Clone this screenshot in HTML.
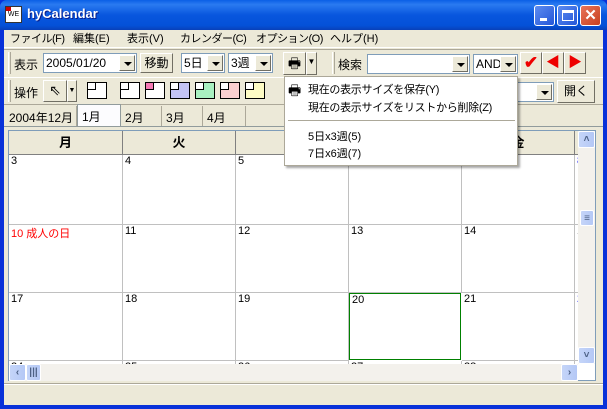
<!DOCTYPE html>
<html><head><meta charset="utf-8"><style>
*{margin:0;padding:0;box-sizing:border-box}
body{width:607px;height:409px;overflow:hidden;font:11px "Liberation Sans","Noto Sans CJK JP",sans-serif;background:#0831d9;position:relative}
.a{position:absolute;white-space:nowrap}
.win{left:4px;top:30px;width:599px;height:375px;background:#ece9d8}
.title{left:0;top:0;width:607px;height:30px;background:linear-gradient(#0a5fe6,#2a7af0 15%,#0856de 50%,#0451d8 85%,#0840b8);border-radius:7px 7px 0 0}
.tb{top:5px;width:21px;height:21px;border:1px solid #fff;border-radius:3px;background:linear-gradient(135deg,#5d8cf0,#2456d8)}
.combo{background:#fff;border:1px solid #7f9db9;height:20px;font-size:12px;padding:2px 2px;line-height:14px;overflow:hidden}
.dd{position:absolute;right:1px;top:1px;width:16px;height:16px;background:#ece9d8;border:1px solid;border-color:#fff #716f64 #716f64 #fff}
.dd:after{content:"";position:absolute;left:4px;top:6px;border:4px solid transparent;border-top:4px solid #000;border-bottom:0}
.btn{background:#ece9d8;border:1px solid;border-color:#fff #716f64 #716f64 #fff;text-align:center;line-height:18px}
.sq{width:20px;height:17px;border:1px solid #000;background:#fff}
.sq i{position:absolute;left:-1px;top:-1px;width:9px;height:8px;border:1px solid #000}
.tab{top:106px;height:20px;border-right:1px solid #aca899;padding:3px 4px 0;font-size:12px}
.cell{border-right:1px solid #c0c0c0;border-bottom:1px solid #c0c0c0;background:#fff;font-size:11px;padding:0 2px}
.hd{top:0;height:24px;background:#ece9d8;border-right:1px solid #808080;border-bottom:1px solid #808080;text-align:center;font-size:13px;line-height:24px;font-weight:bold}
.sb{background:linear-gradient(90deg,#c5d5f8,#b4c8f6);border:1px solid #fff;border-radius:2px;width:17px;height:17px;color:#4d6185;font-size:10px;text-align:center;line-height:15px;font-weight:bold}
</style></head><body>
<div class="a title"></div>
<div class="a" style="left:5px;top:6px;width:17px;height:17px;background:#fff;border:1px solid #333"><div style="height:4px;background:#c00;width:5px"></div><div style="font-size:7px;line-height:8px;text-align:center">WE</div></div>
<div class="a" style="left:27px;top:6px;color:#fff;font-weight:bold;font-size:13px;text-shadow:1px 1px #0a1e8c">hyCalendar</div>
<div class="a tb" style="left:534px"><div style="position:absolute;left:5px;top:12px;width:7px;height:3px;background:#fff"></div></div>
<div class="a tb" style="left:557px"><div style="position:absolute;left:4px;top:4px;width:12px;height:11px;border:1px solid #fff;border-top:3px solid #fff"></div></div>
<div class="a tb" style="left:580px;background:linear-gradient(135deg,#e8745a,#c8401e);color:#fff;font-weight:bold;font-size:15px;text-align:center;line-height:19px">✕</div>
<div class="a win"></div>
<!-- menu -->
<div class="a" style="left:4px;top:30px;width:599px;height:18px;font-size:11px;line-height:18px;border-bottom:1px solid #fff">
<span class="a" style="left:6px;letter-spacing:-0.5px">ファイル(F)</span><span class="a" style="left:69px">編集(E)</span><span class="a" style="left:123px">表示(V)</span><span class="a" style="left:176px;letter-spacing:-0.5px">カレンダー(C)</span><span class="a" style="left:252px;letter-spacing:-0.5px">オプション(O)</span><span class="a" style="left:326px">ヘルプ(H)</span></div>
<!-- toolbar1 -->
<div class="a" style="left:4px;top:49px;width:599px;height:1px;background:#aca899"></div>
<div class="a" style="left:8px;top:52px;width:3px;height:22px;border-left:1px solid #fff;border-right:1px solid #aca899"></div>
<div class="a" style="left:14px;top:56px;font-size:12px">表示</div>
<div class="a combo" style="left:43px;top:53px;width:94px">2005/01/20<div class="dd"></div></div>
<div class="a btn" style="left:140px;top:53px;width:33px;height:20px;font-size:12px">移動</div>
<div class="a combo" style="left:181px;top:53px;width:44px">5日<div class="dd"></div></div>
<div class="a combo" style="left:228px;top:53px;width:45px">3週<div class="dd"></div></div>
<div class="a btn" style="left:283px;top:52px;width:23px;height:23px;font-size:14px;line-height:20px">🖶</div>
<div class="a btn" style="left:306px;top:52px;width:11px;height:23px;font-size:8px">▼</div>
<div class="a" style="left:332px;top:52px;width:3px;height:22px;border-left:1px solid #fff;border-right:1px solid #aca899"></div>
<div class="a" style="left:338px;top:56px;font-size:12px">検索</div>
<div class="a combo" style="left:367px;top:54px;width:103px"><div class="dd"></div></div>
<div class="a combo" style="left:473px;top:54px;width:45px">AND<div class="dd"></div></div>
<div class="a btn" style="left:520px;top:52px;width:22px;height:22px;color:#e00;font-size:17px;line-height:20px;font-weight:bold">✔</div>
<div class="a btn" style="left:542px;top:52px;width:22px;height:22px;color:#e00;font-size:14px;line-height:19px">◀</div>
<div class="a btn" style="left:564px;top:52px;width:22px;height:22px;color:#e00;font-size:14px;line-height:19px">▶</div>
<!-- toolbar2 -->
<div class="a" style="left:4px;top:77px;width:599px;height:1px;background:#fff"></div>
<div class="a" style="left:8px;top:80px;width:3px;height:22px;border-left:1px solid #fff;border-right:1px solid #aca899"></div>
<div class="a" style="left:14px;top:84px;font-size:12px">操作</div>
<div class="a btn" style="left:43px;top:80px;width:24px;height:22px;font-size:14px">⇖</div>
<div class="a btn" style="left:67px;top:80px;width:10px;height:22px;font-size:7px;line-height:20px">▼</div>
<div class="a sq" style="left:87px;top:82px"><i style="background:#fff"></i></div>
<div class="a sq" style="left:120px;top:82px"><i style="background:#fff"></i></div>
<div class="a sq" style="left:145px;top:82px"><i style="background:#f57ab4"></i></div>
<div class="a sq" style="left:170px;top:82px;background:#c4c4f4"><i style="background:#fff"></i></div>
<div class="a sq" style="left:195px;top:82px;background:#a8f0c0"><i style="background:#fff"></i></div>
<div class="a sq" style="left:220px;top:82px;background:#fbd0d0"><i style="background:#fff"></i></div>
<div class="a sq" style="left:245px;top:82px;background:#fdfbc4"><i style="background:#fff"></i></div>
<div class="a combo" style="left:500px;top:82px;width:54px"><div class="dd"></div></div>
<div class="a btn" style="left:557px;top:80px;width:38px;height:23px;line-height:21px;font-size:12px">開く</div>
<div class="a" style="left:4px;top:104px;width:599px;height:1px;background:#aca899"></div>
<!-- tabs -->
<div class="a tab" style="left:5px;width:72px">2004年12月</div>
<div class="a tab" style="left:77px;top:104px;width:44px;height:23px;background:#fcfcfe;border:1px solid #919b9c;border-bottom:none;padding-top:3px">1月</div>
<div class="a tab" style="left:121px;width:41px">2月</div>
<div class="a tab" style="left:162px;width:41px">3月</div>
<div class="a tab" style="left:203px;width:43px">4月</div>
<div class="a" style="left:4px;top:126px;width:599px;height:1px;background:#919b9c"></div>
<!-- grid -->
<div class="a" style="left:8px;top:130px;width:588px;height:251px;background:#fff;border:1px solid #7f9db9;overflow:hidden">
<div class="a hd" style="left:0;width:114px">月</div>
<div class="a hd" style="left:114px;width:113px">火</div>
<div class="a hd" style="left:227px;width:113px">水</div>
<div class="a hd" style="left:340px;width:113px">木</div>
<div class="a hd" style="left:453px;width:113px">金</div>
<div class="a hd" style="left:566px;width:113px">土</div>
</div>
<div class="a" style="left:9px;top:155px;width:569px;height:209px;overflow:hidden">
<div class="a cell" style="left:0;top:0;width:114px;height:70px">3</div>
<div class="a cell" style="left:114px;top:0;width:113px;height:70px">4</div>
<div class="a cell" style="left:227px;top:0;width:113px;height:70px">5</div>
<div class="a cell" style="left:340px;top:0;width:113px;height:70px">6</div>
<div class="a cell" style="left:453px;top:0;width:113px;height:70px">7</div>
<div class="a cell" style="left:566px;top:0;width:113px;height:70px;color:#00f">8</div>
<div class="a cell" style="left:0;top:70px;width:114px;height:68px;color:#f00">10 成人の日</div>
<div class="a cell" style="left:114px;top:70px;width:113px;height:68px">11</div>
<div class="a cell" style="left:227px;top:70px;width:113px;height:68px">12</div>
<div class="a cell" style="left:340px;top:70px;width:113px;height:68px">13</div>
<div class="a cell" style="left:453px;top:70px;width:113px;height:68px">14</div>
<div class="a cell" style="left:566px;top:70px;width:113px;height:68px">15</div>
<div class="a cell" style="left:0;top:138px;width:114px;height:68px">17</div>
<div class="a cell" style="left:114px;top:138px;width:113px;height:68px">18</div>
<div class="a cell" style="left:227px;top:138px;width:113px;height:68px">19</div>
<div class="a cell" style="left:340px;top:138px;width:112px;height:67px;border:1px solid #008000">20</div>
<div class="a cell" style="left:453px;top:138px;width:113px;height:68px">21</div>
<div class="a cell" style="left:566px;top:138px;width:113px;height:68px;color:#00f">22</div>
<div class="a cell" style="left:0;top:206px;width:114px;height:68px">24</div>
<div class="a cell" style="left:114px;top:206px;width:113px;height:68px">25</div>
<div class="a cell" style="left:227px;top:206px;width:113px;height:68px">26</div>
<div class="a cell" style="left:340px;top:206px;width:113px;height:68px">27</div>
<div class="a cell" style="left:453px;top:206px;width:113px;height:68px">28</div>
</div>
<!-- scrollbars -->
<div class="a" style="left:578px;top:131px;width:17px;height:233px;background:#f3f1ec"></div>
<div class="a sb" style="left:578px;top:131px">˄</div>
<div class="a sb" style="left:580px;top:210px;width:14px;height:16px">≡</div>
<div class="a sb" style="left:578px;top:347px">˅</div>
<div class="a" style="left:9px;top:364px;width:569px;height:17px;background:#f3f1ec"></div>
<div class="a sb" style="left:9px;top:364px">‹</div>
<div class="a sb" style="left:26px;top:364px;width:15px">|||</div>
<div class="a sb" style="left:561px;top:364px">›</div>
<!-- status -->
<div class="a" style="left:4px;top:383px;width:599px;height:1px;background:#aca899"></div>
<div class="a" style="left:4px;top:384px;width:599px;height:20px;border-top:1px solid #fff"></div>
<!-- popup menu -->
<div class="a" style="left:284px;top:76px;width:234px;height:90px;background:#fff;border:1px solid #aca899;box-shadow:2px 2px 2px rgba(0,0,0,.35)">
<div class="a" style="left:3px;top:3px;font-size:14px">🖶</div>
<div class="a" style="left:23px;top:4px;letter-spacing:-0.3px">現在の表示サイズを保存(Y)</div>
<div class="a" style="left:23px;top:22px;letter-spacing:-0.3px">現在の表示サイズをリストから削除(Z)</div>
<div class="a" style="left:3px;top:43px;width:227px;height:1px;background:#aca899"></div>
<div class="a" style="left:23px;top:51px">5日x3週(5)</div>
<div class="a" style="left:23px;top:68px">7日x6週(7)</div>
</div>
</body></html>
